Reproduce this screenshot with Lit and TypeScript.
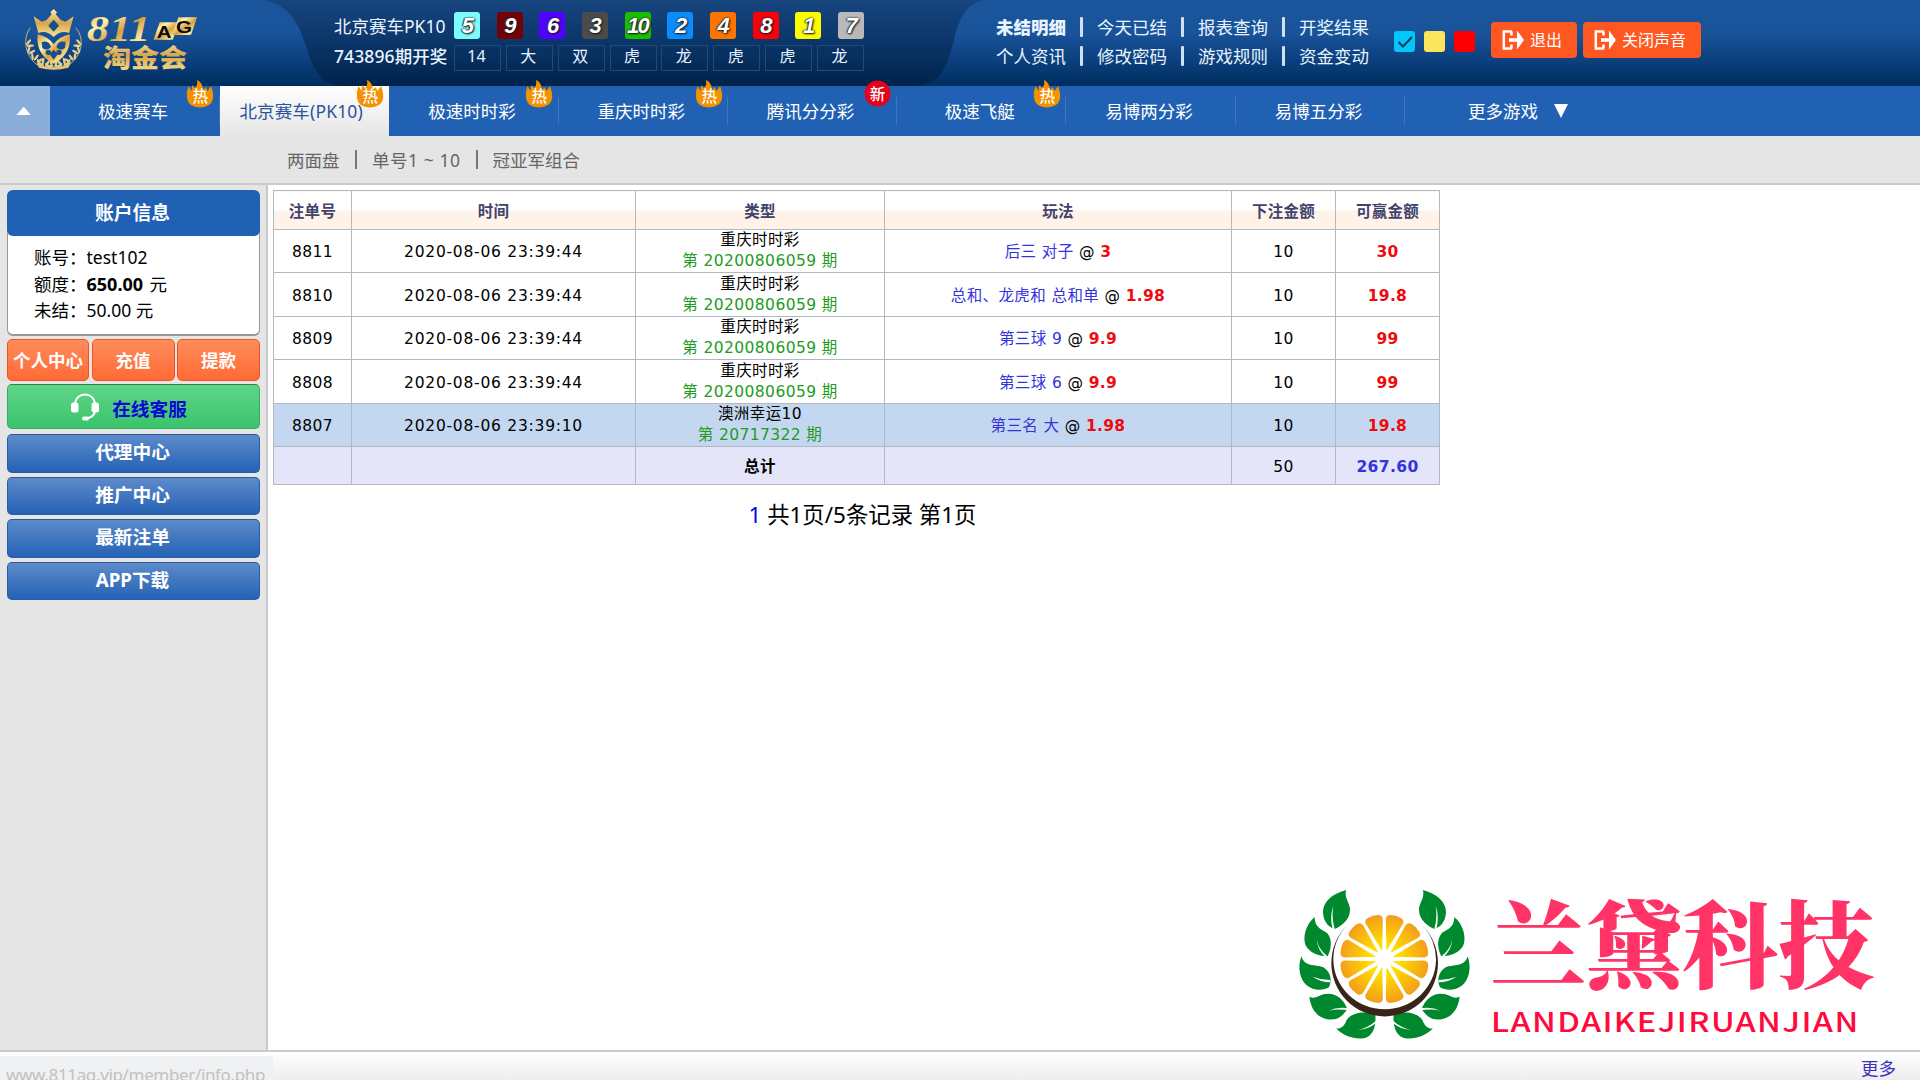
import { LitElement, html, svg, css } from "lit";
import { customElement } from "lit/decorators.js";
import { classMap } from "lit/directives/class-map.js";
import { styleMap } from "lit/directives/style-map.js";

const BALLS = [
  ["5", "#7dfcff"], ["9", "#730206"], ["6", "#5200ff"], ["3", "#4b4b4b"], ["10", "#18bf00"],
  ["2", "#0a8cff"], ["4", "#ff7300"], ["8", "#fb0007"], ["1", "#fffb00"], ["7", "#b9b9b9"],
];
const TAGS = ["14", "大", "双", "虎", "龙", "虎", "虎", "龙"];
const LINKS = [
  ["未结明细", "今天已结", "报表查询", "开奖结果"],
  ["个人资讯", "修改密码", "游戏规则", "资金变动"],
];
const TABS: [string, string][] = [
  ["极速赛车", "hot"], ["北京赛车(PK10)", "hot"], ["极速时时彩", "hot"], ["重庆时时彩", "hot"],
  ["腾讯分分彩", "new"], ["极速飞艇", "hot"], ["易博两分彩", ""], ["易博五分彩", ""],
];
const ROWS = [
  ["8811", "2020-08-06 23:39:44", "重庆时时彩", "20200806059", "后三 对子", "3", "10", "30"],
  ["8810", "2020-08-06 23:39:44", "重庆时时彩", "20200806059", "总和、龙虎和 总和单", "1.98", "10", "19.8"],
  ["8809", "2020-08-06 23:39:44", "重庆时时彩", "20200806059", "第三球 9", "9.9", "10", "99"],
  ["8808", "2020-08-06 23:39:44", "重庆时时彩", "20200806059", "第三球 6", "9.9", "10", "99"],
  ["8807", "2020-08-06 23:39:10", "澳洲幸运10", "20717322", "第三名 大", "1.98", "10", "19.8"],
];

const LAUREL = [0, 1, 2, 3, 4, 5, 6];

@customElement("site-logo")
export class SiteLogo extends LitElement {
  static styles = css`
    :host { display: block; width: 190px; height: 75px; }
    svg { display: block; }
    .num { font: italic bold 110px "Liberation Serif", serif; }
    .ag { font: bold 52px "Liberation Sans", sans-serif; }
    .cn { font: 900 76px "Noto Sans CJK SC", sans-serif; }
  `;
  render() {
    const leaves = LAUREL.map((i) => {
      const a = ((158 + i * 21 - 70) * Math.PI) / 180;
      const x = 118 - 80 * Math.sin(a);
      const y = 122 - 62 * Math.cos(a);
      const r = 62 - i * 24;
      return svg`<g transform="translate(${x} ${y}) rotate(${r - 90})">
        <ellipse cx="6" cy="-6" rx="11" ry="3.6" transform="rotate(-22 6 -6)"/>
        <ellipse cx="6" cy="6" rx="11" ry="3.6" transform="rotate(22 6 6)"/></g>`;
    });
    return html`<svg width="190" height="75" viewBox="0 0 570 225">
      <defs>
        <linearGradient id="g" x1="0" y1="0" x2="1" y2="1">
          <stop offset="0" stop-color="#d79a3a"/><stop offset=".3" stop-color="#fdf3ae"/>
          <stop offset=".55" stop-color="#d9a03e"/><stop offset=".8" stop-color="#fbe9a0"/>
          <stop offset="1" stop-color="#c98b34"/>
        </linearGradient>
        <linearGradient id="v" x1="0" y1="0" x2="0" y2="1">
          <stop offset="0" stop-color="#f9eeb0"/><stop offset=".5" stop-color="#d9a548"/><stop offset="1" stop-color="#f7e59c"/>
        </linearGradient>
      </defs>
      <g fill="#e9cf85">${leaves}<g transform="translate(232 0) scale(-1 1)">${leaves}</g></g>
      <path d="M46 68C22 100 30 150 64 178Q114 196 164 178C202 150 210 100 182 68" fill="none" stroke="#e3c47a" stroke-width="2.5"/>
      <g transform="translate(-2 0)">
        <path d="M58 34L82 50 96 46 112 28 108 22 118 12 128 22 124 28 140 46 154 50 178 34 164 84Q140 74 118 96Q96 74 72 84Z" fill="url(#v)"/>
        <path d="M118 44L134 62 118 80 102 62Z" fill="#174d91"/>
        <path d="M70 88Q100 94 118 118Q136 94 166 88C170 124 158 156 118 176C78 156 66 124 70 88Z" fill="url(#g)"/>
        <path d="M82 112Q102 104 110 126Q96 140 84 128ZM154 112Q134 104 126 126Q140 140 152 128ZM118 134L130 148 118 164 106 148Z" fill="#174d91"/>
        <circle cx="102" cy="142" r="8" fill="#174d91"/><circle cx="134" cy="142" r="8" fill="#174d91"/>
        <path d="M68 178Q118 196 168 178L162 188Q118 200 74 188Z" fill="#e3c47a"/>
      </g>
      <text class="num" x="216" y="108" fill="url(#g)" textLength="190" lengthAdjust="spacingAndGlyphs">811</text>
      <path d="M434 52L490 52 474 104 416 104Z" fill="url(#g)"/>
      <path d="M490 37L546 37 528 90 472 90Z" fill="url(#g)"/>
      <text class="ag" x="425" y="100" fill="#0a0a12" textLength="44" lengthAdjust="spacingAndGlyphs">A</text>
      <text class="ag" x="483" y="83" fill="#0a0a12" textLength="48" lengthAdjust="spacingAndGlyphs">G</text>
      <text class="cn" x="264" y="185" fill="url(#v)" textLength="252" lengthAdjust="spacingAndGlyphs">淘金会</text>
    </svg>`;
  }
}

@customElement("citrus-mark")
export class CitrusMark extends LitElement {
  static styles = css`
    :host { display: block; width: 190px; height: 170px; }
    svg { display: block; }
  `;
  render() {
    const leaves = svg`
      <g fill="#00882f">
        <path d="M168 30C125 42 99 66 99 96C100 122 112 140 134 147C165 132 181 112 180 86C178 66 163 56 168 30Z"/>
        <path d="M74 111C45 135 38 175 47 196C57 216 82 229 113 229C125 205 127 178 112 160C98 148 74 145 74 111Z"/>
        <path d="M34 229C22 262 29 298 50 316C72 334 102 331 117 322C128 298 120 274 100 262C75 252 44 262 34 229Z"/>
        <path d="M58 350C63 392 85 412 112 418C142 422 156 410 172 388C160 350 128 335 100 343C85 348 75 358 58 350Z"/>
        <path d="M138 445C162 470 198 480 225 474C249 466 259 440 256 404C222 391 184 399 170 420C163 440 150 448 138 445Z"/>
      </g>
      <g fill="#fff">
        <path d="M130 77Q118 112 128 147L134 147Q124 112 130 77Z"/>
        <path d="M80 177Q82 208 106 231L112 229Q84 206 80 177Z"/>
        <path d="M68 290Q94 300 120 300L122 307Q92 307 68 290Z"/>
        <path d="M116 392Q142 380 176 385L176 391Q144 385 116 392Z"/>
        <path d="M202 451Q236 442 258 422L258 429Q238 447 202 451Z"/>
      </g>`;
    const segments = Array.from({ length: 12 }, (_, i) => svg`
      <path transform="rotate(${i * 30 + 15} 283 237)" d="M283 212L257 123Q253 109 267 105Q283 101 299 105Q313 109 309 123Z" fill="url(#o)"/>`);
    return html`<svg width="190" height="170" viewBox="0 0 570 510">
      <defs><radialGradient id="o" gradientUnits="userSpaceOnUse" cx="283" cy="237" r="136">
        <stop offset=".35" stop-color="#ffdc00"/><stop offset="1" stop-color="#f39b1d"/>
      </radialGradient></defs>
      ${leaves}<g transform="translate(567 0) scale(-1 1)">${leaves}</g>
      <path d="M172 135A160 160 0 1 0 396 135A154 150 0 1 1 172 135Z" fill="#3a241a"/>
      <circle cx="283" cy="237" r="148" fill="#fff"/>
      ${segments}
      <circle cx="283" cy="237" r="27" fill="#fff"/>
    </svg>`;
  }
}

@customElement("app-root")
export class AppRoot extends LitElement {
  static styles = css`
    :host {
      display: flex; flex-direction: column; width: 1920px; height: 1080px; overflow: hidden;
      position: relative; background: #fff; color: #000;
      font: 17.5px/26px "Noto Sans", "Noto Sans CJK SC", sans-serif;
    }
    * { box-sizing: border-box; }
    svg { display: block; flex: none; }

    .header { position: relative; display: flex; flex: none; height: 86px; color: #e8f4ff;
      background: linear-gradient(#1b559b 0, #19539a 38%, #0d4180 68%, #003063 96%); }
    .wave { position: absolute; left: 0; top: 0; }
    .brand { position: relative; width: 319px; padding: 5px 0 0 15px; }
    .draw { position: relative; display: grid; grid-template-columns: 120px 410px; grid-template-rows: 27px 26px; row-gap: 6px; padding: 12px 0 0 15px; width: 663px; }
    .draw .label { white-space: nowrap; line-height: 28px; }
    .draw .period { font-weight: 500; line-height: 23px; letter-spacing: .1px; }
    .balls { display: flex; justify-content: space-between; }
    .ball { width: 26px; height: 27px; border-radius: 3px; text-align: center; color: #fff; white-space: nowrap;
      font: italic bold 22px/28px "Liberation Sans", sans-serif; letter-spacing: -1.5px; text-shadow: 0 0 2px #000, 1px 1px 2px #222, -1px 0 1px #555; }
    .tags { display: flex; justify-content: space-between; }
    .tag { width: 47px; height: 26px; border: 1.5px solid #224a78; text-align: center; font-size: 16px; line-height: 21px; padding-right: 2px; }
    .links { position: relative; width: 397px; padding-top: 12px; }
    .linkrow { display: flex; height: 29px; align-items: center; padding-left: 14px; }
    .link { width: 71px; margin-right: 13px; white-space: nowrap; }
    .link:last-child { margin: 0; }
    .sep { width: 3px; height: 20px; margin-right: 14px; background: #cfe2f3; border-radius: 1px; }
    .strong { font-weight: 900; }
    .swatches { position: relative; display: flex; gap: 9px; padding: 31px 0 0 15px; width: 112px; }
    .swatch { width: 21px; height: 21px; border-radius: 3px; }
    .actions { position: relative; display: flex; gap: 6px; padding-top: 22px; }
    .action { display: flex; align-items: center; height: 36px; padding: 0 15px 0 11px; gap: 6px; border-radius: 4px; background: #ff5722; color: #fff; font-size: 16px; white-space: nowrap; }

    .nav { position: relative; display: flex; flex: none; height: 50px; background: #2161b3; color: #fff; }
    .toggle { display: flex; align-items: center; justify-content: center; width: 50px; padding-right: 3px; background: #8badd9; }
    .tab { position: relative; width: 169.3px; padding-right: 4px; text-align: center; line-height: 50px; white-space: nowrap; }
    .tab:nth-child(2) { width: 170px; }
    .tab::after { content: ""; position: absolute; right: 0; top: 11px; height: 27px; width: 1px; background: #4377b8; }
    .tab.active { background: linear-gradient(#fefefe, #e6e6e6); color: #2a559c; padding-right: 7px; letter-spacing: .15px; }
    .tab.active::after { display: none; }
    .badge { position: absolute; left: 136px; top: -6px; }
    .bt { font: 500 15.5px "Noto Sans CJK SC", sans-serif; }
    .more { display: flex; align-items: center; gap: 16px; margin-left: 63px; }

    .subnav { display: flex; flex: none; align-items: center; height: 49px; padding: 0 0 0 287px; color: #666; background: #e5e5e5; border-bottom: 2px solid #c9cbcb; white-space: pre; }
    .subnav i { width: 2px; height: 19px; margin: 0 15px; background: #777; }
    .subnav span:first-child { width: 53px; }
    .subnav .range { letter-spacing: .55px; }

    .body { display: flex; flex: 1; min-height: 0; }
    .side { width: 268px; padding: 5px 6px 0 7px; background: #e5e5e5; border-right: 2px solid #c8c8ca; font-size: 18.7px; }
    .card { height: 146px; border-radius: 6px; background: #fff; border: 1px solid #999; border-bottom-width: 2px; border-top: 0; }
    .card h3 { margin: 0 -1px; height: 46px; padding-right: 2px; border-radius: 6px; background: #2161b3; color: #fff; font-size: 18.8px; line-height: 47px; text-align: center; }
    .info { padding: 8px 0 0 26px; font-size: 17.5px; line-height: 26.5px; }
    .info div { display: flex; white-space: pre; }
    .info span { width: 52.5px; }
    .info b { font-size: 18px; margin-right: 2px; }
    .trio { display: grid; grid-template-columns: 82px 83px 83px; gap: 2.5px; margin-top: 3px; }
    .btn { display: flex; align-items: center; justify-content: center; border-radius: 5px; font-weight: bold; color: #fff; white-space: nowrap; }
    .orange { height: 42px; font-size: 17.5px; border: 1.5px solid #f4511e; background: linear-gradient(#ff8d5c, #ff6a35); }
    .green { height: 45px; margin: 3px 0 5px; padding-right: 9px; gap: 13px; border: 1.5px solid #36ad62; border-top-color: #2e7f50; background: linear-gradient(#5fd588, #3ac46c); color: #0909d2; }
    .green span { padding-top: 4px; }
    .blue { height: 38.5px; margin-bottom: 4px; padding: 0 2px 2px 0; border: 1.5px solid #235dac; border-top-color: #295893; background: linear-gradient(#5d8bcb, #2562b4); }

    .main { padding: 5px 0 0 5px; }
    table { border-collapse: collapse; table-layout: fixed; width: 1167px; font: 15.5px/20px "DejaVu Sans", "Noto Sans CJK SC", sans-serif; letter-spacing: .4px; }
    th, td { padding: 2px 0 0; border: 1px solid #b0b8c0; text-align: center; vertical-align: middle; white-space: nowrap; }
    th { height: 39px; color: #40436c; letter-spacing: .3px; background: linear-gradient(#fff 50%, #fff2e9 50%); padding-top: 3px; }
    tr td { height: 43px; }
    tr:nth-child(odd) td { height: 44px; }
    td.kind { padding: 0; line-height: 21px; }
    .time { letter-spacing: .75px; }
    .issue { color: #239b23; }
    .play { color: #3434dc; }
    .win { font-weight: bold; color: #f00a0e; letter-spacing: .3px; }
    .hover td { background: #c3d8f0; }
    tr.total td { height: 38px; background: #e4e5f8; }
    .sum { font-weight: bold; color: #3434dc; letter-spacing: .4px; }
    .pager { width: 1167px; margin-top: 15px; padding-left: 12px; text-align: center; font-size: 22.4px; line-height: 30px; }
    .pager b { font-weight: normal; color: #0505e8; }

    .footer { display: flex; flex: none; height: 30px; border-top: 2px solid #cbcbcb; background: linear-gradient(#fff, #ededed); justify-content: space-between; }
    .status { height: 24px; margin-top: 4px; width: 273px; padding: 10px 0 0 6px; background: #f0f1f2; color: #bfc1c3; white-space: nowrap; font-size: 17px; letter-spacing: -.35px; }
    .status span { display: block; line-height: 18px; }
    .foot-more { padding: 4px 24px 0 0; color: #3b32bb; line-height: 24px; }

    .watermark { position: absolute; left: 1290px; top: 880px; display: flex; }
    .wm-text { width: 400px; margin-left: 13px; }
    .wm-text svg { overflow: visible; }
    .wm-cn { font: 900 95px/110px "Noto Serif CJK SC", "Noto Sans CJK SC", serif; }
    .wm-en { font: 500 27px/30px "Noto Sans CJK SC", sans-serif; }
  `;

  badge(kind: string) {
    if (!kind) return "";
    return kind === "hot"
      ? html`<svg class="badge" width="28" height="28" viewBox="0 0 28 28">
          <path d="M11 0Q16 2 17 9Q18 10 19 7Q21 9 21.500 11Q23 9 25 6Q28 14 27 19Q25 27 14 27.500Q2 27 1 18Q0 12 2.500 6Q4 9 6 11Q5 7 7 5Q7.500 8 9 8Q12 6 11 0Z" fill="#f39100"/>
          <text class="bt" x="6.500" y="22" fill="#fff">热</text></svg>`
      : html`<svg class="badge" width="28" height="28" viewBox="0 0 28 28">
          <circle cx="13.500" cy="13.500" r="13" fill="#e6001a"/>
          <text class="bt" x="5.700" y="19.500" fill="#fff">新</text></svg>`;
  }

  exitIcon() {
    return html`<svg width="22" height="20" viewBox="0 0 22 20">
      <path d="M10 1.500H1.800V18.500H10M9.500 1.500V5.500M9.500 18.500V14.500" fill="none" stroke="#fff" stroke-width="2.500"/>
      <path d="M7 8.300H15V0.500L22 10 15 19.500V11.700H7Z" fill="#fff"/></svg>`;
  }

  render() {
    return html`
      <div class="header">
        <svg class="wave" width="1000" height="86" viewBox="0 0 1000 86">
          <defs><linearGradient id="d" x1="0" y1="0" x2="0" y2="1">
            <stop offset="0" stop-color="#17457e"/><stop offset=".45" stop-color="#0c376b"/><stop offset="1" stop-color="#00234b"/>
          </linearGradient></defs>
          <path d="M264 0C290 6 298 22 306 46C313 68 318 82 340 86H918C944 82 948 62 954 40C959 18 966 4 984 0Z" fill="url(#d)"/>
        </svg>
        <div class="brand"><site-logo></site-logo></div>
        <div class="draw">
          <div class="label">北京赛车PK10</div>
          <div class="balls">${BALLS.map(([n, c]) => html`<span class="ball" style=${styleMap({ background: c })}>${n}</span>`)}</div>
          <div class="label period">743896期开奖</div>
          <div class="tags">${TAGS.map((t) => html`<span class="tag">${t}</span>`)}</div>
        </div>
        <div class="links">
          ${LINKS.map((row, r) => html`<div class="linkrow">
            ${row.map((t, i) => html`${i ? html`<span class="sep"></span>` : ""}<span class=${classMap({ link: true, strong: !r && !i })}>${t}</span>`)}
          </div>`)}
        </div>
        <div class="swatches">
          <svg width="21" height="21" viewBox="0 0 21 21"><rect width="21" height="21" rx="3" fill="#00c8fa"/><path d="M4.500 11L9 15.500L18 6" fill="none" stroke="#0b3b62" stroke-width="2"/></svg>
          <span class="swatch" style=${styleMap({ background: "#fbe35c" })}></span>
          <span class="swatch" style=${styleMap({ background: "#fa0000" })}></span>
        </div>
        <div class="actions">
          <div class="action">${this.exitIcon()}退出</div>
          <div class="action">${this.exitIcon()}关闭声音</div>
        </div>
      </div>

      <div class="nav">
        <div class="toggle"><svg width="17" height="8" viewBox="0 0 18 9"><path d="M1 9Q9 0 9 0Q10 0 17 9Z" fill="#fff"/></svg></div>
        ${TABS.map(([t, k], i) => html`<div class=${classMap({ tab: true, active: i === 1 })}>${t}${this.badge(k)}</div>`)}
        <div class="more">更多游戏<svg width="14" height="14" viewBox="0 0 14 14"><path d="M0 0H14L7 14Z" fill="#fff"/></svg></div>
      </div>

      <div class="subnav"><span>两面盘</span><i></i><span class="range">单号1 ~ 10</span><i></i><span>冠亚军组合</span></div>

      <div class="body">
        <div class="side">
          <div class="card">
            <h3>账户信息</h3>
            <div class="info">
              <div><span>账号：</span>test102</div>
              <div><span>额度：</span><b>650.00</b> 元</div>
              <div><span>未结：</span>50.00 元</div>
            </div>
          </div>
          <div class="trio">
            <div class="btn orange">个人中心</div><div class="btn orange">充值</div><div class="btn orange">提款</div>
          </div>
          <div class="btn green">
            <svg width="28" height="28" viewBox="0 0 28 28">
              <path d="M4 12C4 -2 24 -2 24 12M24 17C24 23 20 25 14 25.500" fill="none" stroke="#fff" stroke-width="2"/>
              <rect x="0" y="9.500" width="7.500" height="10" rx="2.500" fill="#fff"/><rect x="20.500" y="9.500" width="7.500" height="10" rx="2.500" fill="#fff"/>
              <rect x="11" y="23.500" width="7" height="4" rx="2" fill="#fff"/>
            </svg><span>在线客服</span>
          </div>
          ${["代理中心", "推广中心", "最新注单", "APP下载"].map((t) => html`<div class="btn blue">${t}</div>`)}
        </div>
        <div class="main">
          <table>
            <colgroup>${[78, 284, 249, 347, 104, 104].map((w) => html`<col style=${styleMap({ width: `${w}px` })}>`)}</colgroup>
            <tr>${["注单号", "时间", "类型", "玩法", "下注金额", "可赢金额"].map((t) => html`<th>${t}</th>`)}</tr>
            ${ROWS.map((r, i) => html`<tr class=${classMap({ hover: i === 4 })}>
              <td>${r[0]}</td><td class="time">${r[1]}</td>
              <td class="kind">${r[2]}<br><span class="issue">第 ${r[3]} 期</span></td>
              <td><span class="play">${r[4]}</span> @ <span class="win">${r[5]}</span></td>
              <td>${r[6]}</td><td class="win">${r[7]}</td></tr>`)}
            <tr class="total"><td></td><td></td><td><b>总计</b></td><td></td><td>50</td><td class="sum">267.60</td></tr>
          </table>
          <div class="pager"><b>1</b> 共1页/5条记录 第1页</div>
        </div>
      </div>

      <div class="footer">
        <div class="status"><span>www.811ag.vip/member/info.php</span></div>
        <div class="foot-more">更多</div>
      </div>

      <div class="watermark">
        <citrus-mark></citrus-mark>
        <div class="wm-text">
          <svg width="400" height="170" viewBox="0 0 400 170">
            <text class="wm-cn" x="-3" y="101" fill="#ff3366" textLength="384" lengthAdjust="spacingAndGlyphs">兰黛科技</text>
            <text class="wm-en" transform="translate(-2 152) scale(1.2 1)" fill="#ff0a3c" textLength="306" lengthAdjust="spacing">LANDAIKEJIRUANJIAN</text>
          </svg>
        </div>
      </div>
    `;
  }
}
